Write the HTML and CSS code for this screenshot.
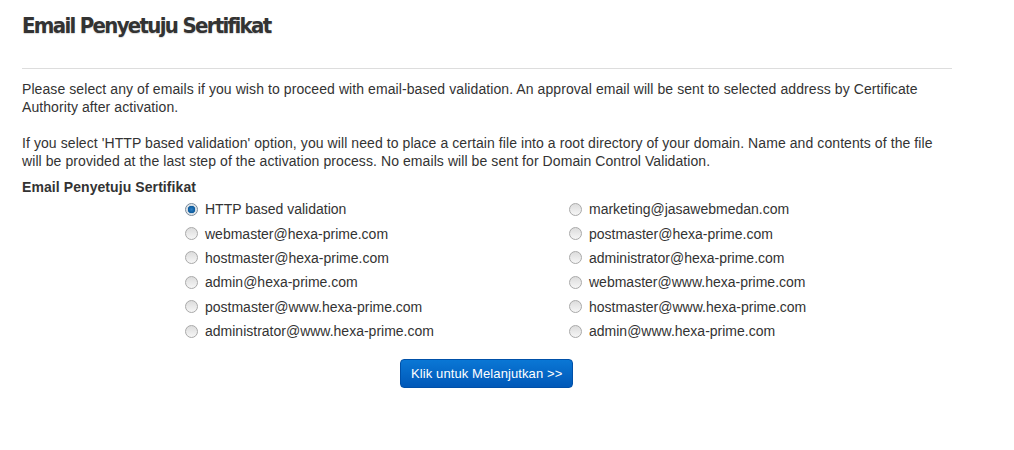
FILE: index.html
```html
<!DOCTYPE html>
<html lang="en">
<head>
  <meta charset="utf-8">
  <title>Email Penyetuju Sertifikat</title>
  <link rel="stylesheet" href="styles.css">
</head>
<body>
  <div class="page">
    <h1 class="page-title">Email Penyetuju Sertifikat</h1>
    <hr class="rule">

    <p>Please select any of emails if you wish to proceed with email-based validation. An approval email will be sent to selected address by Certificate Authority after activation.</p>
    <p>If you select 'HTTP based validation' option, you will need to place a certain file into a root directory of your domain. Name and contents of the file will be provided at the last step of the activation process. No emails will be sent for Domain Control Validation.</p>

    <form class="approver-form">
      <h4 class="field-label">Email Penyetuju Sertifikat</h4>
      <div class="approver-grid">
        <label class="choice"><input type="radio" name="approver" value="http" checked> HTTP based validation</label>
        <label class="choice"><input type="radio" name="approver" value="marketing@jasawebmedan.com"> marketing@jasawebmedan.com</label>
        <label class="choice"><input type="radio" name="approver" value="webmaster@hexa-prime.com"> webmaster@hexa-prime.com</label>
        <label class="choice"><input type="radio" name="approver" value="postmaster@hexa-prime.com"> postmaster@hexa-prime.com</label>
        <label class="choice"><input type="radio" name="approver" value="hostmaster@hexa-prime.com"> hostmaster@hexa-prime.com</label>
        <label class="choice"><input type="radio" name="approver" value="administrator@hexa-prime.com"> administrator@hexa-prime.com</label>
        <label class="choice"><input type="radio" name="approver" value="admin@hexa-prime.com"> admin@hexa-prime.com</label>
        <label class="choice"><input type="radio" name="approver" value="webmaster@www.hexa-prime.com"> webmaster@www.hexa-prime.com</label>
        <label class="choice"><input type="radio" name="approver" value="postmaster@www.hexa-prime.com"> postmaster@www.hexa-prime.com</label>
        <label class="choice"><input type="radio" name="approver" value="hostmaster@www.hexa-prime.com"> hostmaster@www.hexa-prime.com</label>
        <label class="choice"><input type="radio" name="approver" value="administrator@www.hexa-prime.com"> administrator@www.hexa-prime.com</label>
        <label class="choice"><input type="radio" name="approver" value="admin@www.hexa-prime.com"> admin@www.hexa-prime.com</label>
      </div>
      <div class="actions">
        <button type="submit" class="btn-primary">Klik untuk Melanjutkan &gt;&gt;</button>
      </div>
    </form>
  </div>
</body>
</html>
```

FILE: styles.css
```css
body { margin: 0; background: #fff; color: #333; font-family: "Liberation Sans", Arial, sans-serif; font-size: 14px; line-height: 18px; }
.page { width: 930px; padding: 0 0 0 22px; }
.page-title { margin: 0; padding-top: 11px; font-family: "DejaVu Sans Condensed", "DejaVu Sans", sans-serif; font-stretch: condensed; font-size: 22px; font-weight: 700; letter-spacing: -1.7px; line-height: 30px; color: #333; text-shadow: 0 1px 1px rgba(0,0,0,0.15); }
.rule { margin: 27px 0 0; border: 0; border-top: 1px solid #ddd; height: 0; }
p { margin: 11px 0 18px; letter-spacing: 0.08px; }
.field-label { margin: -10px 0 1px; font-size: 14px; font-weight: 700; letter-spacing: 0.08px; }
.approver-grid { display: grid; grid-template-columns: 384px auto; margin-left: 163px; }
.choice { display: flex; align-items: center; gap: 7px; height: 24.4px; }
.choice input { appearance: none; margin: 0; width: 13px; height: 13px; border-radius: 50%; border: 1px solid #a9a9a9; background: linear-gradient(#dcdcdc, #f6f6f6); }
.choice input:checked { background: radial-gradient(circle, #2e7fc4 0, #0b5a9c 3.5px, #cfd8e0 4px, #eef2f6 6px); border-color: #7a8a99; }
.actions { margin: 16px 0 0 378px; }
.btn-primary { font-family: "Liberation Sans", Arial, sans-serif; font-size: 13px; letter-spacing: 0.1px; color: #fff; padding: 6px 10px 6px; border: 1px solid #0050a8; border-radius: 4px; background: linear-gradient(#0a77d5, #0058b8); }
```
